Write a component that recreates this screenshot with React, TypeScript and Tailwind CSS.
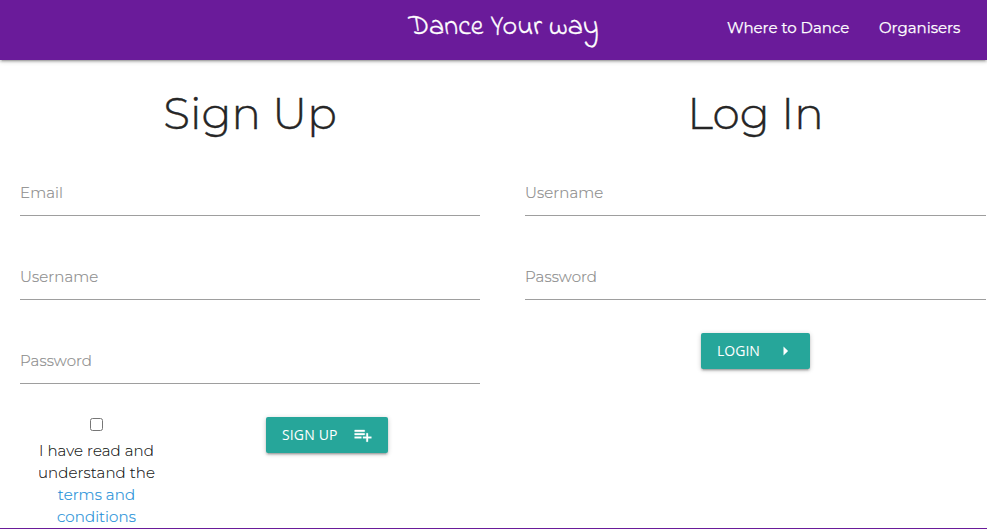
import React from "react";

function Field({ label }: { label: string }) {
  return (
    <div className="mb-9 flex h-12 items-center border-b border-[#9e9e9e] pt-0.5">
      <label className="text-[15px] leading-[22px] font-light tracking-[0.1px] text-[#8c8c8c] [-webkit-text-stroke:0.2px_#8c8c8c]">{label}</label>
    </div>
  );
}

function Heading({ children }: { children: React.ReactNode }) {
  return (
    <h1 className="mt-[30px] mb-[30px] h-12 text-center text-[43.8px] leading-[48px] font-light tracking-[0.1px] [-webkit-text-stroke:0.4px_#212121]">
      {children}
    </h1>
  );
}

const buttonClass =
  "flex h-9 items-center rounded-xs bg-[#26a69a] pl-4 font-['Open_Sans',sans-serif] text-sm text-white shadow-[0_2px_2px_0_rgba(0,0,0,0.14),0_3px_1px_-2px_rgba(0,0,0,0.12),0_1px_5px_0_rgba(0,0,0,0.2)]";

export default function App() {
  return (
    <div className="flex h-[529px] flex-col overflow-hidden bg-white font-[Montserrat,Inter,sans-serif] text-[15px] text-black/87">
      <nav className="z-10 grid h-[60px] shrink-0 grid-cols-[1fr_auto_1fr] items-center bg-[#6a1b9a] text-white shadow-[0_2px_2px_0_rgba(0,0,0,0.14),0_3px_1px_-2px_rgba(0,0,0,0.12),0_1px_5px_0_rgba(0,0,0,0.2)]">
        <span />
        <a className="flex w-[191px] justify-center pb-1 whitespace-nowrap">
          <span className="ml-5 font-['Indie_Flower',cursive] text-[28px] font-normal tracking-[0.1px] [-webkit-text-stroke:0.3px_white]">Dance Your way</span>
        </a>
        <div className="flex justify-end gap-[30px] pr-[26px] pb-1 whitespace-nowrap [-webkit-text-stroke:0.25px_white]">
          <a className="w-[122px]">Where to Dance</a>
          <a className="w-[82px]">Organisers</a>
        </div>
      </nav>
      <main className="flex h-[468px] shrink-0 gap-[45px] pl-5">
        <section className="w-[460px] shrink-0">
          <Heading>Sign Up</Heading>
          <Field label="Email" />
          <Field label="Username" />
          <Field label="Password" />
          <div className="-mt-[3px] flex items-start">
            <div className="flex w-[153px] flex-col items-center pt-px text-center leading-[22px] font-light tracking-[0.1px] [-webkit-text-stroke:0.2px_currentColor]">
              <input type="checkbox" className="mb-[9px] size-[13px] appearance-none rounded-[2.5px] border border-[#767676] bg-white" />
              <span>I have read and</span>
              <span>understand the</span>
              <a className="text-[#2490d8]">terms and</a>
              <a className="text-[#2490d8]">conditions</a>
            </div>
            <button className={`${buttonClass} ml-[93px] w-[122px] gap-[15px]`}>
              <span className="tracking-[0.01em]">SIGN UP</span>
              <svg className="size-[20px]" viewBox="0 0 24 24" fill="currentColor" stroke="currentColor" strokeWidth="0.4"><path d="M14 10H2v2h12v-2zm0-4H2v2h12V6zm4 8v-4h-2v4h-4v2h4v4h2v-4h4v-2h-4zM2 16h8v-2H2v2z" /></svg>
            </button>
          </div>
        </section>
        <section className="w-[461px] shrink-0">
          <Heading>Log In</Heading>
          <Field label="Username" />
          <Field label="Password" />
          <button className={`${buttonClass} mx-auto -mt-[3px] w-[109px] gap-4`}>
            <span>LOGIN</span>
            <svg className="size-[20px]" viewBox="0 0 24 24" fill="currentColor"><path d="M9 17.5l5.5-5.5L9 6.500z" /></svg>
          </button>
        </section>
      </main>
      <div className="h-px shrink-0 bg-[#6a1b9a]" />
    </div>
  );
}
